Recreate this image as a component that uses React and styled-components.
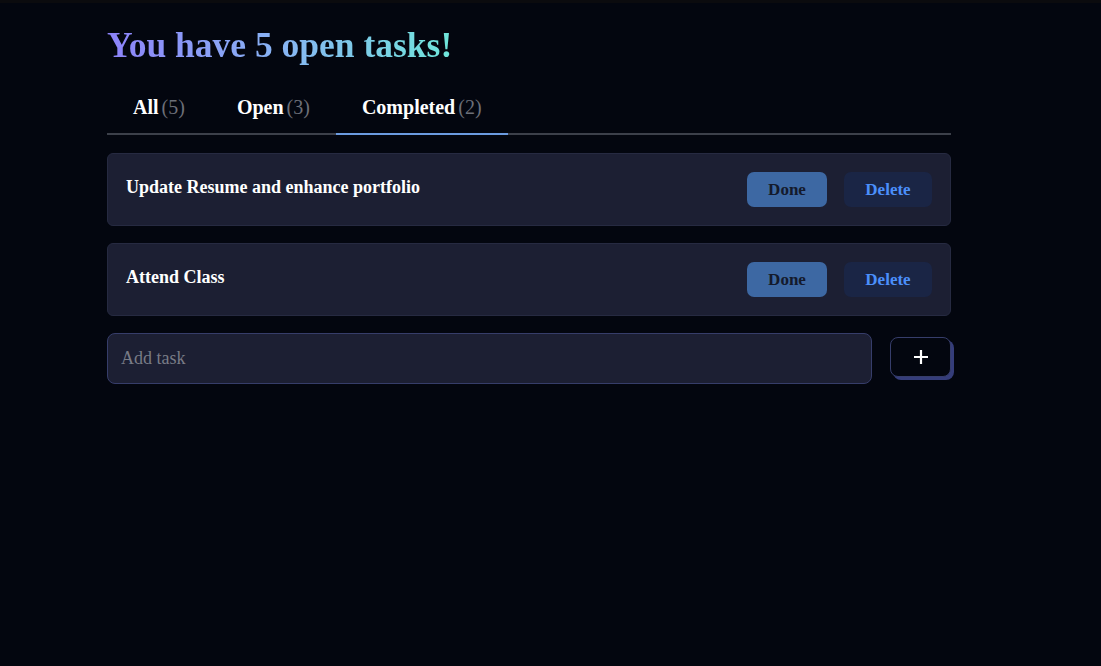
import React, { useState } from "react";
import styled, { createGlobalStyle } from "styled-components";

const GlobalStyle = createGlobalStyle`
  * { box-sizing: border-box; }
  html, body {
    margin: 0;
    background: #03060f;
    color: #ffffff;
    font-family: "Liberation Serif", "DejaVu Serif", serif;
  }
  body { border-top: 3px solid #0b0b0e; min-height: 666px; }
`

const Main = styled.main`
  width: 844px;
  margin-left: 107px;
  padding-top: 21px;
`

const Heading = styled.h1`
  margin: 0;
  font-size: 35.5px;
  line-height: 42px;
  font-weight: 700;
  display: inline-block;
  background: linear-gradient(90deg, #8d82fa 0%, #88b4f4 50%, #6fe6da 100%);
  -webkit-background-clip: text;
  background-clip: text;
  color: transparent;
`

const Tabs = styled.nav`
  display: flex;
  margin-top: 18px;
  border-bottom: 2px solid #3c404a;
`

const Tab = styled.button`
  background: none;
  border: none;
  padding: 12px 26px 14px;
  margin-bottom: -2px;
  border-bottom: 2px solid ${p => (p.$active ? "#6b9be0" : "transparent")};
  font-family: inherit;
  font-size: 20px;
  font-weight: 700;
  color: #ffffff;
  cursor: pointer;
  span {
    font-weight: 400;
    color: #6c6f78;
    margin-left: 3px;
  }
`

const List = styled.section`
  display: flex;
  flex-direction: column;
  gap: 17px;
  margin-top: 18px;
`

const Card = styled.div`
  display: flex;
  align-items: center;
  justify-content: space-between;
  height: 73px;
  padding: 0 18px;
  background: #1c1f33;
  border: 1px solid #262a41;
  border-radius: 6px;
  .title {
    font-size: 18px;
    font-weight: 700;
    margin-top: -4px;
  }
  .actions {
    display: flex;
    gap: 17px;
  }
`

const Button = styled.button`
  height: 35px;
  width: ${p => (p.$variant === "delete" ? "88px" : "80px")};
  border: none;
  border-radius: 7px;
  font-family: inherit;
  font-size: 17px;
  font-weight: 700;
  background: ${p => (p.$variant === "delete" ? "#1a2545" : "#3d68a3")};
  color: ${p => (p.$variant === "delete" ? "#4b8ffb" : "#141a2c")};
  cursor: pointer;
`

const AddRow = styled.form`
  display: flex;
  align-items: center;
  gap: 18px;
  margin-top: 17px;
`

const Input = styled.input`
  flex: 1;
  height: 51px;
  padding: 0 13px;
  background: #1c1f33;
  border: 1px solid #363d6a;
  border-radius: 8px;
  font-family: inherit;
  font-size: 18px;
  color: #ffffff;
  outline: none;
  &::placeholder { color: #787b86; }
`

const AddButton = styled.button`
  width: 61px;
  height: 40px;
  margin-top: -4px;
  background: #03060f;
  border: 1px solid #363d6a;
  border-radius: 8px;
  box-shadow: 3px 3px 0 #353d7a;
  display: flex;
  align-items: center;
  justify-content: center;
  cursor: pointer;
`

const tasks = [
  { id: 1, title: "Update Resume and enhance portfolio" },
  { id: 2, title: "Attend Class" },
];

export default function App() {
  const [tab, setTab] = useState("completed");
  return (
    <>
      <GlobalStyle />
      <Main>
        <Heading>You have 5 open tasks!</Heading>
        <Tabs>
          <Tab $active={tab === "all"} onClick={() => setTab("all")}>All<span>(5)</span></Tab>
          <Tab $active={tab === "open"} onClick={() => setTab("open")}>Open<span>(3)</span></Tab>
          <Tab $active={tab === "completed"} onClick={() => setTab("completed")}>Completed<span>(2)</span></Tab>
        </Tabs>
        <List>
          {tasks.map(task => (
            <Card key={task.id}>
              <div className="title">{task.title}</div>
              <div className="actions">
                <Button type="button">Done</Button>
                <Button type="button" $variant="delete">Delete</Button>
              </div>
            </Card>
          ))}
        </List>
        <AddRow onSubmit={e => e.preventDefault()}>
          <Input placeholder="Add task" />
          <AddButton type="submit" aria-label="add">
            <svg width="16" height="16" viewBox="0 0 16 16">
              <path d="M8 1v14M1 8h14" stroke="#ffffff" strokeWidth="2.2" />
            </svg>
          </AddButton>
        </AddRow>
      </Main>
    </>
  );
}
